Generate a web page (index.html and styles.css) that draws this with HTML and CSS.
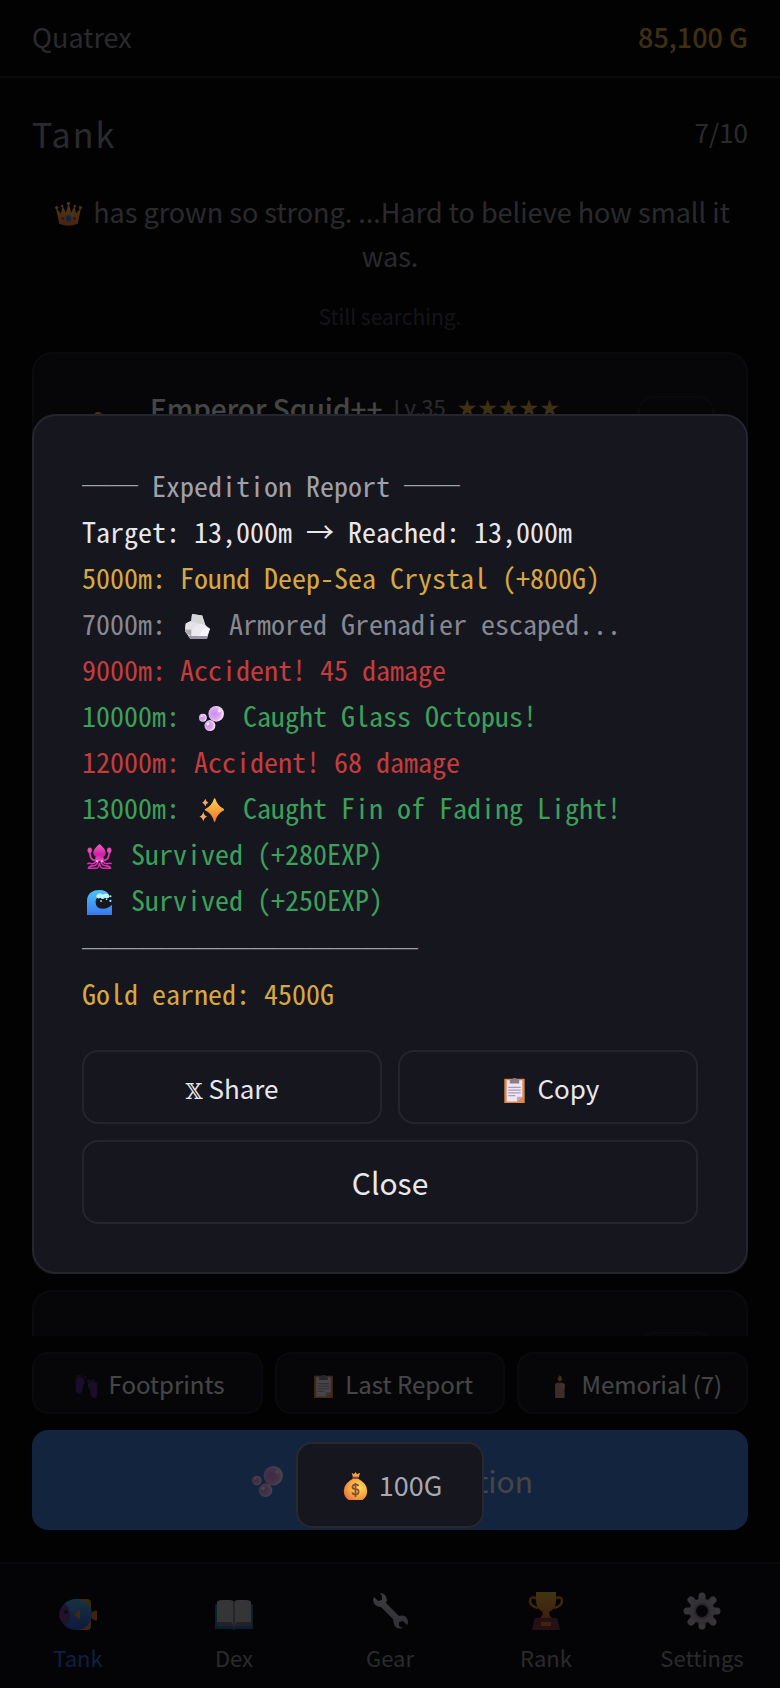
FILE: index.html
```html
<!DOCTYPE html>
<html lang="en">
<head>
    <meta charset="UTF-8">
    <meta name="viewport" content="width=device-width, initial-scale=1.0">
    <title>Quatrex</title>
    <link rel="stylesheet" href="styles.css">
</head>
<body>
    <!-- shared icons -->
    <svg class="sprite" width="0" height="0" aria-hidden="true">
        <defs>
            <linearGradient id="gold" x1="0" y1="0" x2="0" y2="1">
                <stop offset="0" stop-color="#ffcf4a"/><stop offset="1" stop-color="#f0742e"/>
            </linearGradient>
            <radialGradient id="bubble" cx="0.4" cy="0.5" r="0.65">
                <stop offset="0" stop-color="#c98bf5"/><stop offset="0.55" stop-color="#dfa8f2"/><stop offset="0.85" stop-color="#fbe3ee"/><stop offset="1" stop-color="#8fd6f5"/>
            </radialGradient>
            <linearGradient id="wave" x1="0" y1="0" x2="0" y2="1">
                <stop offset="0" stop-color="#4cc3fb"/><stop offset="1" stop-color="#3a78ee"/>
            </linearGradient>
            <linearGradient id="squid" x1="0" y1="0" x2="0" y2="1">
                <stop offset="0" stop-color="#ec66b8"/><stop offset="0.6" stop-color="#d21fa6"/><stop offset="1" stop-color="#e548c4"/>
            </linearGradient>
            <radialGradient id="bag" cx="0.65" cy="0.4" r="0.7">
                <stop offset="0" stop-color="#ffdc57"/><stop offset="0.6" stop-color="#f9a83c"/><stop offset="1" stop-color="#e8763f"/>
            </radialGradient>
            <linearGradient id="fish" x1="0" y1="0" x2="0" y2="1">
                <stop offset="0" stop-color="#49a9dc"/><stop offset="1" stop-color="#3055c8"/>
            </linearGradient>
            <linearGradient id="steel" x1="0" y1="0" x2="0" y2="1">
                <stop offset="0" stop-color="#c9c5cf"/><stop offset="1" stop-color="#a79fb8"/>
            </linearGradient>
        </defs>
        <symbol id="i-crown" viewBox="0 0 32 32">
            <path d="M5 28 1 9l6 7 2-9 4 8 3-12 3 12 4-8 2 9 6-7-4 19q-11 5-22 0z" fill="url(#gold)"/>
            <circle cx="16" cy="4" r="2" fill="#f5b53a"/><circle cx="2" cy="9" r="2" fill="#f5b53a"/><circle cx="30" cy="9" r="2" fill="#f5b53a"/><circle cx="8.500" cy="7" r="1.500" fill="#f5b53a"/><circle cx="23.500" cy="7" r="1.500" fill="#f5b53a"/>
            <ellipse cx="16" cy="22" rx="3" ry="4" fill="#2f7df0"/><circle cx="9" cy="22" r="1.800" fill="#d8304a"/><circle cx="23" cy="22" r="1.800" fill="#d8304a"/>
        </symbol>
        <symbol id="i-rock" viewBox="0 0 32 32">
            <path d="M9 0 22 2l4 12 6 5-4 13H7L0 22l1-10 7-3z" fill="#d6d4da"/>
            <path d="M9 0 22 2l4 12-9 0-9-5z" fill="#d6d6d6"/>
            <path d="M1 12 7 9l10 3-9 8-8-1z" fill="#e3e1e6"/>
            <path d="m8 20 9-8 9 2 2 4-9 10H8z" fill="#ebe8f0"/>
            <path d="m17 28 9-11 6 2-4 9z" fill="#f6f3fb"/>
            <path d="M0 20 8 20v8L3 25z" fill="#aaa6b2"/><path d="M4 28h25l-1 4H7z" fill="#9d94a5"/>
        </symbol>
        <symbol id="i-bubbles" viewBox="0 0 32 32">
            <circle cx="22" cy="10" r="10" fill="url(#bubble)"/>
            <circle cx="5" cy="15" r="5" fill="url(#bubble)"/>
            <circle cx="14" cy="25" r="7" fill="url(#bubble)"/>
            <circle cx="26" cy="6" r="2" fill="#fff" opacity="0.700"/><circle cx="3.500" cy="13" r="1.200" fill="#fff"/><circle cx="11.500" cy="23" r="1.800" fill="#fff" opacity="0.800"/>
        </symbol>
        <symbol id="i-sparkles" viewBox="0 0 32 32">
            <path d="M20 1q3 10 12 14-9 4-12 15Q17 19 8 15 17 11 20 1z" fill="url(#gold)" stroke="url(#gold)" stroke-width="1.500" stroke-linejoin="round"/>
            <path d="M8 1q1 4 4 5-3 1-4 5-1-4-4-5 3-1 4-5zM5.500 17.500q1 5 5 6.500-4 1-5 6-1-5-5-6 4-1.500 5-6.500z" fill="#ffa45a"/>
        </symbol>
        <symbol id="i-squid" viewBox="0 0 32 32">
            <path d="M16 0q8 6 8 12-1 3-3 4l1 6H10l1-6q-2-1-3-4 0-6 8-12z" fill="url(#squid)"/>
            <path d="M3 8q1 9 3 11 2 2 6 2M29 8q-1 9-3 11-2 2-6 2" fill="none" stroke="#d936ad" stroke-width="2.500"/>
            <ellipse cx="3.500" cy="8" rx="2.800" ry="3.500" fill="#e84ab5"/><ellipse cx="28.500" cy="8" rx="2.800" ry="3.500" fill="#e84ab5"/>
            <path d="M12 22q-3 4-7 3-4-1-4 1M14 23q-2 5-7 5-4 0-5 3h10q3 0 4-7M20 22q3 4 7 3 4-1 4 1M18 23q2 5 7 5 4 0 5 3H20q-3 0-4-7" fill="none" stroke="#db2fae" stroke-width="2"/>
            <circle cx="13" cy="22" r="1.500" fill="#ff9be6"/><circle cx="19" cy="22" r="1.500" fill="#ff9be6"/>
        </symbol>
        <symbol id="i-wave" viewBox="0 0 32 32">
            <path d="M0 32V14C0 4 8 0 16 0q9 0 12 6-4 1-7 1-10 1-10 8 0 9 9 9 7 0 12-5v13z" fill="url(#wave)"/>
            <path d="M12 7q4-5 8-1 4-3 8 0l1 3q-3 3-6 1-3 3-6 0-3 2-5-1z" fill="#bdf1fb"/>
            <circle cx="30" cy="8" r="1.400" fill="#9be8fb"/><circle cx="30" cy="14" r="1.400" fill="#9be8fb"/><circle cx="18" cy="14" r="1.200" fill="#9be8fb"/><circle cx="25" cy="12" r="1" fill="#9be8fb"/>
        </symbol>
        <symbol id="i-clipboard" viewBox="0 0 32 32">
            <path d="M3 1h26v31H3z" fill="#e08a50"/><path d="M6 3h20v21l-7 6H6z" fill="#eee6f5"/><path d="M19 30v-6h7z" fill="#b9aac8"/>
            <path d="M10 2h3q0-2 3-2t3 2h3v5H10z" fill="#8a7d90"/>
            <path d="M8 12h16M8 15.500h16M8 19h16M8 22.500h9" stroke="#a79db5" stroke-width="1.400"/>
        </symbol>
        <symbol id="i-feet" viewBox="0 0 32 32">
            <path d="M1 5q6-4 12 1 1 5-2 9 0 10-5 11-5 0-5-6zM31 11q-6-4-13 0-1 5 3 9 0 11 5 12 5 0 5-6z" fill="#56308c"/>
            <path d="M2 2h9M13 3h2M19 8h9M17 8h2" stroke="#56308c" stroke-width="3" stroke-dasharray="2 1"/>
        </symbol>
        <symbol id="i-candle" viewBox="0 0 32 32">
            <path d="M10 12q6-3 13 0v20H10z" fill="#c79c8c"/><path d="M19 12q2-1 4 1v6q-3 1-4-7z" fill="#dfb6a0"/>
            <path d="M16.500 0q4 5 3 7-3 3-6 0-1-2 3-7z" fill="#eb9a2c"/><path d="M16.500 8v4" stroke="#8a5a3a" stroke-width="1.500"/>
        </symbol>
        <symbol id="i-bag" viewBox="0 0 32 36">
            <path d="m11 1 3 2 2-3 2 3 4-2-2 6h-7z" fill="#fba832"/><path d="M12 6h8v4h-8z" fill="#8a4a42"/>
            <path d="M12 9h8q11 6 11 15 0 8-6 12H7q-6-4-6-12Q1 15 12 9z" fill="url(#bag)"/>
            <path d="M20 18q-1-2-4-2t-4 3q0 3 4 3t4 3q0 4-4 4t-4-3M16 14v18" fill="none" stroke="#8a4d38" stroke-width="2.200"/>
        </symbol>
        <symbol id="i-fish" viewBox="0 0 38 38">
            <path d="M18 7h10q4 0 4 4v23q0 4-4 4H18z" fill="#c98b20"/>
            <path d="M32 22q3-5 6-3v9q-3 2-6-3z" fill="#d4772a"/>
            <ellipse cx="17" cy="22.500" rx="16" ry="15.500" fill="url(#fish)"/>
            <path d="M6 12q10 10 1 21-6-4-7-9 0-8 6-12z" fill="#684390"/><circle cx="7" cy="20" r="2" fill="#2b2148"/>
            <path d="m15 22.500 6-5v10z" fill="#dc8a28"/>
        </symbol>
        <symbol id="i-book" viewBox="0 0 38 38">
            <path d="M0 13q0-1 2-1h34q2 0 2 1v24H21l-2 1-2-1H0z" fill="#1e6c96"/>
            <path d="M2 10q1-2 5-2h8q3 0 4 2 1-2 4-2h8q4 0 5 2v23H2z" fill="#b3aeb6"/>
            <path d="M2 30h14l3 3 3-3h14v4H22l-3 2-3-2H2z" fill="#77688f"/><path d="M19 10v22" stroke="#75687f" stroke-width="1.500"/>
        </symbol>
        <symbol id="i-wrench" viewBox="0 0 38 38">
            <path d="M9 1q6 0 7 7l-1 3 13 13q8-2 9 6 0 2-1 3l-4-4-4 1v4l4 2q-7 2-9-4l-1-5L10 15q-7 0-8-7l1-3 4 4 4-1V4z" fill="url(#steel)"/>
        </symbol>
        <symbol id="i-trophy" viewBox="0 0 38 38">
            <path d="M9 6q-6-2-6 3t8 7M29 6q6-2 6 3t-8 7" fill="none" stroke="#c98820" stroke-width="2.500"/>
            <path d="M9 0h20v8q0 9-7 12l1 4 3 3H12l3-3 1-4Q9 17 9 8z" fill="url(#gold)" opacity="0.850"/>
            <path d="M8 26h22l3 12H5z" fill="#7c3a46"/><path d="M14 30h10v4H14z" fill="#c98820"/>
        </symbol>
        <symbol id="i-gear" viewBox="0 0 38 38">
            <g stroke="#b3adbd" stroke-width="7" stroke-linecap="round">
                <path d="M19 4v4M19 30v4M4 19h4M30 19h4M8 8l4 4M26 26l4 4M30 8l-4 4M12 26l-4 4"/>
            </g>
            <circle cx="19" cy="19" r="9.500" fill="none" stroke="#aaa3b4" stroke-width="6"/><circle cx="19" cy="19" r="7" fill="none" stroke="#857e90" stroke-width="2"/>
        </symbol>
    </svg>

    <div class="app">
        <header class="header">
            <span class="player">Quatrex</span>
            <span class="gold">85,100 G</span>
        </header>

        <main class="main">
            <div class="title-row">
                <h1 class="title">Tank</h1>
                <span class="count">7/10</span>
            </div>
            <p class="message"><svg class="emoji"><use href="#i-crown"/></svg> has grown so strong. ...Hard to believe how small it was.</p>
            <p class="hint">Still searching.</p>

            <div class="cards">
                <div class="card card-first">
                    <svg class="card-icon"><use href="#i-crown"/></svg>
                    <div class="card-name"><strong>Emperor Squid++</strong> <span class="level">Lv.35</span> <span class="stars">★★★★★</span></div>
                    <button class="card-button" type="button" aria-label="Options"></button>
                </div>
                <div class="card"></div>
                <div class="card"></div>
                <div class="card"></div>
                <div class="card"><button class="card-button" type="button" aria-label="Options"></button></div>
            </div>
        </main>

        <div class="actions">
            <div class="action-row">
                <button class="small-button" type="button"><svg class="emoji"><use href="#i-feet"/></svg> Footprints</button>
                <button class="small-button" type="button"><svg class="emoji"><use href="#i-clipboard"/></svg> Last Report</button>
                <button class="small-button" type="button"><svg class="emoji"><use href="#i-candle"/></svg> Memorial (7)</button>
            </div>
            <button class="go-button" type="button"><svg class="emoji"><use href="#i-bubbles"/></svg> Go on Expedition</button>
        </div>

        <nav class="nav">
            <button class="nav-item active" type="button"><svg class="nav-icon"><use href="#i-fish"/></svg>Tank</button>
            <button class="nav-item" type="button"><svg class="nav-icon"><use href="#i-book"/></svg>Dex</button>
            <button class="nav-item" type="button"><svg class="nav-icon"><use href="#i-wrench"/></svg>Gear</button>
            <button class="nav-item" type="button"><svg class="nav-icon"><use href="#i-trophy"/></svg>Rank</button>
            <button class="nav-item" type="button"><svg class="nav-icon"><use href="#i-gear"/></svg>Settings</button>
        </nav>
    </div>

    <div class="overlay">
        <div class="modal" role="dialog" aria-label="Expedition Report">
            <div class="report">
                <div class="line muted">── Expedition Report ──</div>
                <div class="line">Target: 13,000m → Reached: 13,000m</div>
                <div class="line found">5000m: Found Deep-Sea Crystal (+800G)</div>
                <div class="line escaped">7000m: <svg class="emoji"><use href="#i-rock"/></svg> Armored Grenadier escaped...</div>
                <div class="line accident">9000m: Accident! 45 damage</div>
                <div class="line caught">10000m: <svg class="emoji"><use href="#i-bubbles"/></svg> Caught Glass Octopus!</div>
                <div class="line accident">12000m: Accident! 68 damage</div>
                <div class="line caught">13000m: <svg class="emoji"><use href="#i-sparkles"/></svg> Caught Fin of Fading Light!</div>
                <div class="line caught"><svg class="emoji"><use href="#i-squid"/></svg> Survived (+280EXP)</div>
                <div class="line caught"><svg class="emoji"><use href="#i-wave"/></svg> Survived (+250EXP)</div>
                <div class="line muted divider">────────────</div>
                <div class="line found">Gold earned: 4500G</div>
            </div>
            <div class="share-row">
                <button class="share-button" type="button"><span class="x-logo">𝕏</span> Share</button>
                <button class="share-button" type="button"><svg class="emoji"><use href="#i-clipboard"/></svg> Copy</button>
            </div>
            <button class="close-button" type="button">Close</button>
        </div>
    </div>

    <div class="toast" role="status"><svg class="emoji"><use href="#i-bag"/></svg> 100G</div>
</body>
</html>
```
FILE: styles.css
```css
* {
    box-sizing: border-box;
}
body {
    margin: 0;
    background: #08080c;
    color: #e8e8ec;
    font-family: "Noto Sans CJK JP", "Noto Sans", sans-serif;
    font-size: 28px;
}
button {
    font-family: inherit;
    color: inherit;
    margin: 0;
    padding: 0;
}
.sprite {
    position: absolute;
}
.emoji {
    width: 25px;
    height: 25px;
    margin: 0 5px;
    vertical-align: -4px;
}
.app {
    display: flex;
    flex-direction: column;
    height: 100vh;
    overflow: hidden;
}

/* header */
.header {
    display: flex;
    justify-content: space-between;
    align-items: center;
    padding: 16px 32px 18px;
    font-size: 27px;
    line-height: 42px;
    border-bottom: 2px solid #22222c;
}
.player {
    color: #8c8c98;
}
.gold {
    color: #d4a03c;
    font-weight: 500;
}

/* tank list */
.main {
    flex: 1;
    min-height: 0;
    overflow: hidden;
    padding: 30px 32px 0;
}
.title-row {
    display: flex;
    justify-content: space-between;
    align-items: flex-start;
    line-height: 52px;
}
.title {
    margin: 0;
    font-size: 34px;
    font-weight: 400;
    letter-spacing: 2px;
    color: #8c8c98;
}
.count {
    font-size: 26px;
    line-height: 48px;
    color: #8c8c98;
}
.message {
    margin: 0;
    padding-top: 30px;
    font-size: 27px;
    line-height: 44px;
    text-align: center;
    color: #8c8c98;
}
.message .emoji {
    width: 27px;
    height: 27px;
}
.hint {
    margin: 0;
    padding: 20px 0 18px;
    font-size: 21px;
    line-height: 36px;
    text-align: center;
    color: #44444e;
}
.cards {
    display: flex;
    flex-direction: column;
    gap: 16px;
}
.card {
    display: flex;
    align-items: flex-start;
    min-height: 218px;
    padding: 40px 32px;
    background: #16161e;
    border: 2px solid #22222c;
    border-radius: 20px;
}
.card-first {
    min-height: 220px;
    padding-top: 42px;
}
.card-icon {
    width: 64px;
    height: 64px;
    margin: 12px 20px 0 0;
}
.card-name {
    display: flex;
    gap: 11px;
    line-height: 24px;
}
.card-name strong {
    font-weight: 500;
}
.level {
    font-size: 22px;
    line-height: 20px;
    color: #8c8c98;
}
.stars {
    font-family: "DejaVu Sans", sans-serif;
    font-size: 23px;
    color: #d4a03c;
}
.card-button {
    width: 76px;
    height: 60px;
    margin-left: auto;
    background: none;
    border: 2px solid #22222c;
    border-radius: 16px;
}

/* bottom buttons */
.actions {
    display: flex;
    flex-direction: column;
    gap: 16px;
    padding: 16px 32px 32px;
}
.action-row {
    display: grid;
    grid-template-columns: repeat(3, 1fr);
    gap: 12px;
}
.small-button {
    height: 62px;
    font-size: 24px;
    background: #16161e;
    border: 2px solid #22222c;
    border-radius: 16px;
}
.small-button .emoji {
    width: 23px;
    height: 23px;
}
.go-button {
    height: 100px;
    font-size: 30px;
    background: #3c78cf;
    border: none;
    border-radius: 16px;
}
.go-button .emoji {
    width: 31px;
    height: 31px;
}

/* tabs */
.nav {
    display: grid;
    grid-template-columns: repeat(5, 1fr);
    padding: 28px 0 12px;
    background: #101016;
    border-top: 2px solid #22222c;
}
.nav-item {
    display: flex;
    flex-direction: column;
    align-items: center;
    gap: 8px;
    font-size: 22px;
    line-height: 38px;
    color: #8c8c98;
    background: none;
    border: none;
}
.nav-item.active {
    color: #3468cf;
}
.nav-icon {
    width: 38px;
    height: 38px;
}

/* report dialog */
.overlay {
    position: fixed;
    inset: 0;
    display: flex;
    align-items: center;
    padding: 32px;
    background: rgba(0, 0, 0, 0.7);
}
.modal {
    display: flex;
    flex-direction: column;
    gap: 16px;
    width: 100%;
    padding: 46px 48px 48px;
    background: #16161e;
    border: 2px solid #252530;
    border-radius: 24px;
}
/* report uses the font's half-width latin glyphs */
.report {
    margin-bottom: 18px;
    font-feature-settings: "hwid";
    line-height: 46px;
    white-space: nowrap;
}
.line {
    height: 46px;
}
.muted {
    color: #a0a0aa;
}
.found {
    color: #d8a840;
}
.escaped {
    color: #888890;
}
.accident {
    color: #c43c3c;
}
.caught {
    color: #3ca05a;
}
.divider {
    height: 48px;
    line-height: 52px;
}
.share-row {
    display: grid;
    grid-template-columns: 1fr 1fr;
    gap: 16px;
}
.share-button,
.close-button {
    height: 74px;
    font-size: 26px;
    background: none;
    border: 2px solid #252530;
    border-radius: 16px;
}
.close-button {
    height: 84px;
    font-size: 30px;
}
.x-logo {
    font-family: "DejaVu Serif", "DejaVu Sans", serif;
    font-size: 22px;
}
.toast {
    position: fixed;
    left: 0;
    right: 0;
    bottom: 160px;
    width: fit-content;
    margin: 0 auto;
    padding: 20px 40px;
    font-size: 27px;
    line-height: 42px;
    color: #a8a8b0;
    background: #16161e;
    border: 2px solid #2a272f;
    border-radius: 16px;
}
.toast .emoji {
    height: 28px;
}
```
